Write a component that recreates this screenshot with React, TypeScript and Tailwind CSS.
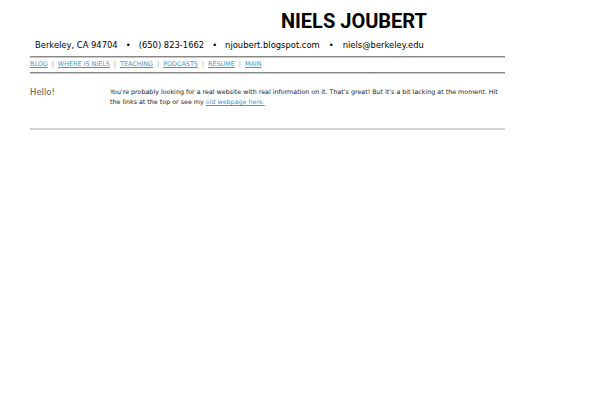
export default function App() {
  const links = ["BLOG", "WHERE IS NIELS", "TEACHING", "PODCASTS", "RESUME", "MAIN"];
  return (
    <div className="w-[600px] h-[400px] bg-white text-[#222]" style={{ fontFamily: '"DejaVu Sans", sans-serif' }}>
      <div className="ml-[30px] w-[475px] pt-[9px]">
        <div className="w-[397px] text-right">
          <h1 className="text-[20px] leading-[24px] font-bold text-black" style={{ fontFamily: 'Roboto, sans-serif' }}>NIELS JOUBERT</h1>
        </div>
        <div className="mt-[6px] pl-[5px] flex items-center text-[8.4px] leading-[12px] text-black">
          <span>Berkeley, CA 94704</span>
          <span className="mx-[8px]">•</span>
          <span>(650) 823-1662</span>
          <span className="mx-[8px]">•</span>
          <span>njoubert.blogspot.com</span>
          <span className="mx-[9px]">•</span>
          <span>niels@berkeley.edu</span>
        </div>
        <div className="mt-[5px] border-t border-t-[#888] border-b border-b-[#c8c8c8]" />
        <div className="flex items-center h-[14px] text-[6.4px] text-[#999]">
          {links.map((l, i) => (
            <span key={l} className="flex items-center">
              {i > 0 && <span className="mx-[4px]">|</span>}
              <a href="#" className="underline text-[#3d9bd1]">{l}</a>
            </span>
          ))}
        </div>
        <div className="border-t border-t-[#888] border-b border-b-[#c8c8c8]" />
        <div className="flex mt-[13px]">
          <div className="w-[80px] text-[8.5px] leading-[10px] text-[#555]">Hello!</div>
          <div className="w-[392px] text-[6.35px] leading-[10px] text-[#222]">
            You're probably looking for a real website with real information on it. That's great! But it's a bit lacking at the moment. Hit the links at the top or see my{" "}
            <a href="#" className="underline text-[#3d9bd1]">old webpage here.</a>
          </div>
        </div>
        <div className="mt-[21px] border-t-2 border-t-[#d4d4d4]" />
      </div>
    </div>
  );
}
